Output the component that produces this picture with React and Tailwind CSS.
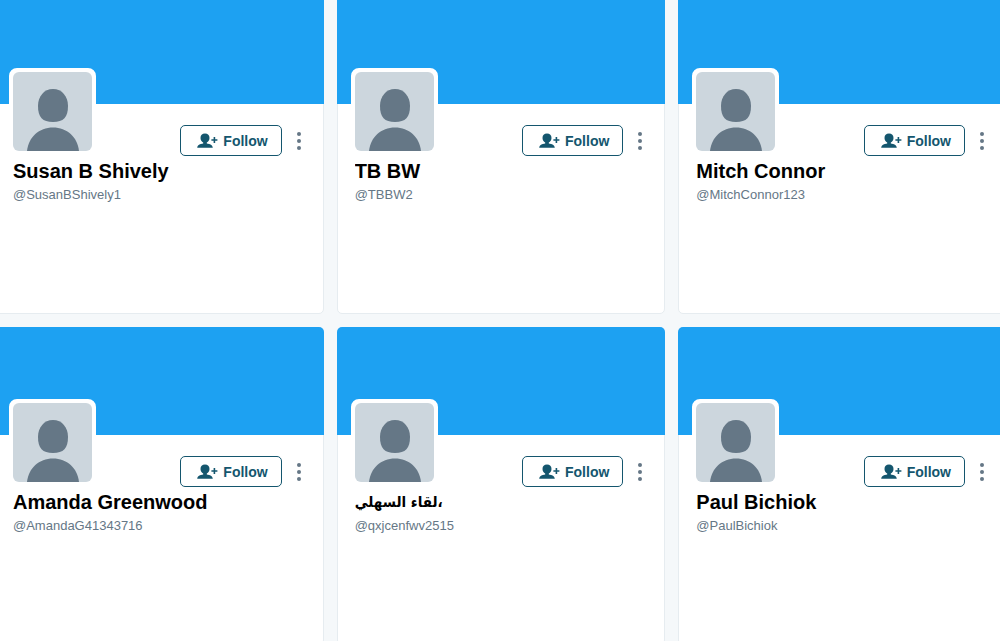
const users = [
    { name: "Susan B Shively", handle: "SusanBShively1" },
    { name: "TB BW", handle: "TBBW2" },
    { name: "Mitch Connor", handle: "MitchConnor123" },
    { name: "Amanda Greenwood", handle: "AmandaG41343716" },
    { name: "لقاء السهلي،", handle: "qxjcenfwv2515", arabic: true },
    { name: "Paul Bichiok", handle: "PaulBichiok" },
];

function DefaultAvatar() {
    return (
        <svg viewBox="0 0 79 79" className="block w-full rounded-md bg-[#ccd6dd]" aria-hidden="true">
            <path
                d="M40 17C49 17 55 24.5 55 34C55 45.5 50.5 50 40 50C29.5 50 25 45.5 25 34C25 24.5 31 17 40 17Z"
                fill="#657786"
            />
            <path d="M14 79C15.5 65 26 55.5 40 55.5C54 55.5 64.5 65 66 79Z" fill="#657786" />
        </svg>
    );
}

function FollowIcon() {
    return (
        <svg viewBox="0 0 21 15" className="h-[15px] w-[21px]" fill="currentColor" aria-hidden="true">
            <path d="M8 0.6C10.9 0.6 12.5 2.4 12.5 4.9C12.5 7 11.3 8.7 9.8 9.4V10.4C13 10.9 15.6 11.8 15.8 14.8H0.2C0.4 11.8 3 10.9 6.2 10.4V9.4C4.7 8.7 3.5 7 3.5 4.9C3.5 2.4 5.1 0.6 8 0.6Z" />
            <path d="M16.6 4H18.2V6.2H20.4V7.8H18.2V10H16.6V7.8H14.4V6.2H16.6Z" />
        </svg>
    );
}

function UserCard({ user }) {
    return (
        <article className="flex h-[318px] flex-col rounded-[5px] border border-[#e6ecf0] bg-white">
            {/* Cover */}
            <div className="-mx-px -mt-px h-[108px] shrink-0 rounded-t-[5px] bg-[#1da1f2]" />

            <div className="px-[13px]">
                <div className="flex justify-between">
                    <div className="-mt-9 w-[87px] rounded-lg border-4 border-white bg-white">
                        <DefaultAvatar />
                    </div>
                    <div className="mt-[21px] flex h-[31px] items-center">
                        <button
                            type="button"
                            className="flex h-[31px] items-center gap-[5px] rounded-[5px] border border-[#14566e] pr-[13px] pl-4 text-sm font-bold text-[#14566e]"
                        >
                            <FollowIcon />
                            Follow
                        </button>
                        <button
                            type="button"
                            aria-label="More user actions"
                            className="flex h-[31px] w-7 items-center justify-center pl-[6px] text-[#657786]"
                        >
                            <svg viewBox="0 0 4 18" className="h-[18px] w-1" fill="currentColor" aria-hidden="true">
                                <circle cx="2" cy="2" r="2" />
                                <circle cx="2" cy="9" r="2" />
                                <circle cx="2" cy="16" r="2" />
                            </svg>
                        </button>
                    </div>
                </div>

                <div className="pl-1">
                    <h2
                        className={`mt-[3px] h-6 truncate leading-6 font-bold text-black ${
                            user.arabic ? "font-['DejaVu_Sans_Condensed','DejaVu_Sans',sans-serif] text-[15px]" : "text-[20px]"
                        }`}
                    >
                        {user.name}
                    </h2>
                    <a href={`#${user.handle}`} className="block text-[13px] leading-6 text-[#657786]">
                        @{user.handle}
                    </a>
                </div>
            </div>
        </article>
    );
}

export default function App() {
    return (
        <main className="h-screen overflow-hidden bg-[#f5f8fa] font-['Liberation_Sans','DejaVu_Sans',sans-serif]">
            <div className="-mt-1 -mr-[7px] -ml-[5px] grid grid-cols-3 gap-[13px]">
                {users.map((user) => (
                    <UserCard key={user.handle} user={user} />
                ))}
            </div>
        </main>
    );
}
